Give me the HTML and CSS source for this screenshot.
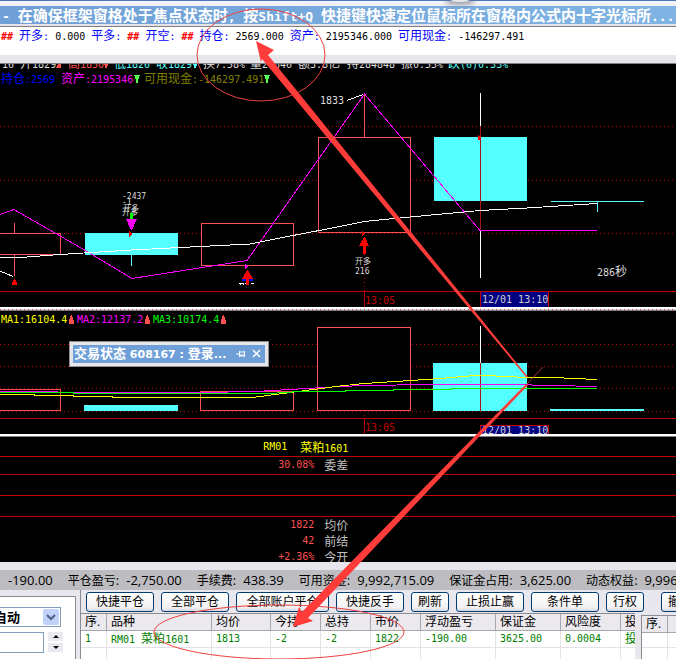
FILE: index.html
```
<!DOCTYPE html>
<html lang="zh-CN">
<head>
<meta charset="utf-8">
<title>菜粕1601</title>
<link rel="stylesheet" href="styles.css">
</head>
<body>
<main class="app">
  <header class="title"><h1><span class="lat">- </span>在确保框架窗格处于焦点状态时<span class="lat">, </span>按<span class="lat">Shift+Q </span>快捷键快速定位鼠标所在窗格内公式内十字光标所<span class="lat">...</span></h1></header>

  <p class="info mono"><b>## </b><i><span class="cn">开多</span>: </i>0.000 <i><span class="cn">平多</span>: </i><b>## </b><i><span class="cn">开空</span>: </i><b>## </b><i><span class="cn">持仓</span>: </i>2569.000 <i><span class="cn">资产</span>: </i>2195346.000 <i><span class="cn">可用现金</span>: </i>-146297.491</p>

  <section class="chart price">
    <svg class="plot mono" viewBox="0 64 676 243" preserveAspectRatio="xMinYMin slice">
      <g class="ticker">
        <text x="2" y="68">16 <tspan class="cn">开</tspan>1829</text>
        <path class="f-salmon" d="M56 68l3-5h2v5z"/>
        <text class="f-salmon" x="68" y="68"><tspan class="cn">高</tspan>1850</text><path class="f-salmon" d="M104 63h5l-3 6z"/>
        <text class="f-cyan" x="114" y="68"><tspan class="cn">低</tspan>1826</text>
        <text class="f-cyan" x="156" y="68"><tspan class="cn">收</tspan>1829</text><path class="f-cyan" d="M193 63h5l-3 6z"/>
        <text x="203" y="68"><tspan class="cn">换</tspan>7.58%</text>
        <text x="250" y="68"><tspan class="cn">量</tspan>21846</text>
        <text x="298" y="68"><tspan class="cn">额</tspan>3.8<tspan class="cn">亿</tspan></text>
        <text x="347" y="68"><tspan class="cn">持</tspan>284848</text>
        <text x="401" y="68"><tspan class="cn">振</tspan>0.55%</text>
        <text class="f-cyan" x="448" y="68"><tspan class="cn">跌</tspan>(6)0.33%</text>
      </g>
      <text class="f-blue" x="1" y="83"><tspan class="cn">持仓</tspan>:2569</text>
      <text class="f-magenta" x="61" y="83"><tspan class="cn">资产</tspan>:2195346</text>
      <path class="f-lime" d="M134 75h6l-2 5v3h-2v-3z"/>
      <text class="f-olive" x="144" y="83"><tspan class="cn">可用现金</tspan>:-146297.491</text>
      <path class="f-lime" d="M264 75h6l-2 5v3h-2v-3z"/>

      <path class="dots" d="M0 126.500H676M0 180.500H676M0 233.500H676M364.500 254V291"/>
      <path class="axis" d="M0 291.500H676M364.500 291V307"/>

      <g class="box">
        <path d="M14.500 223V276"/><rect x="-10" y="233.500" width="70.500" height="21"/>
        <rect x="201.500" y="223.500" width="92" height="42"/>
        <path d="M364.500 94V137"/><rect x="318.500" y="137.500" width="92" height="95"/>
      </g>
      <path class="f-red" d="M12 285v-2l2-4h1l2 4v2z"/>
      <g class="f-cyan">
        <rect x="85" y="233" width="93" height="22"/><rect x="131" y="255" width="1" height="11"/>
        <rect x="434" y="137" width="93" height="64"/>
        <rect x="551" y="201" width="93" height="1"/><rect x="597" y="201" width="1" height="11"/>
      </g>
      <rect class="f-white" x="480" y="93" width="1" height="185"/>
      <rect class="f-cross" x="480" y="126" width="1" height="104"/>

      <path class="line s-magenta" d="M0 214.500L14 209.500L88 252L132 278.500L247 260.500L364.500 94L480 230.500H597"/>
      <path class="line s-white" d="M0 257.500H20L60 254.500L131 250L200 246.500L250 244L293 235.500L340 226.500L364 221.500L410 217L480 210.500L527 208L597 203.500"/>
      <path class="line s-white" d="M0 271L13 276.500M347 100.500L363 94.500"/>

      <text x="320" y="104">1833</text>
      <g class="mark">
        <text x="122" y="199">-2437</text><text x="122" y="205">-1</text>
        <text class="cn-s" x="123" y="211">开多</text><text class="cn-s" x="122" y="215">开多</text>
        <text class="cn-s" x="355" y="264">开多</text><text x="355" y="274">216</text>
      </g>
      <path class="f-green" d="M130 213h3v6h-3z"/><path class="f-magenta" d="M126 219h11l-5 11h-1z"/>
      <path class="f-red" d="M129 231l3 2v2l-3 2zM362 231l3 2v1l-3 2zM478 135l3 2v2l-3 1z"/>
      <path class="f-magenta" d="M245 264l3 2v1l-3 2z"/>
      <path class="f-blue" d="M242 279h11v2h-11z"/>
      <path class="line s-white" d="M239 283.500h4m2 0h4m2 0h3M240.500 283v2M243.500 283v2"/>
      <path class="f-red" d="M247 270h1l5 9h-4v6h-3v-6h-4zM364 237h1l4 9h-3v8h-3v-8h-4z"/>
      <text x="597" y="276">286<tspan class="cn">秒</tspan></text>

      <text class="f-axis" x="365" y="304">13:05</text>
      <rect class="stamp" x="480.500" y="291.500" width="68" height="18"/>
      <text class="f-stamp" x="482" y="303">12/01 13:10</text>
    </svg>
  </section>
  <div class="split dotted"></div>

  <section class="chart volume">
    <svg class="plot mono" viewBox="0 311 676 123" preserveAspectRatio="xMinYMin slice">
      <text class="f-yellow" x="1" y="323">MA1:16104.4</text><path class="f-salmon" d="M69 324v-3l2-6h1l2 6v3z"/>
      <text class="f-magenta" x="77" y="323">MA2:12137.2</text><path class="f-salmon" d="M145 324v-3l2-6h1l2 6v3z"/>
      <text class="f-green" x="153" y="323">MA3:10174.4</text><path class="f-salmon" d="M221 324v-3l2-6h1l2 6v3z"/>
      <path class="dots" d="M0 344.500H676M0 366.500H676M0 388.500H676M0 411.500H676M364.500 411V418"/>
      <path class="axis" d="M0 418.500H676M364.500 418V434"/>
      <g class="box">
        <rect x="-10" y="389.500" width="70.500" height="21"/>
        <rect x="200.500" y="391.500" width="93" height="19"/>
        <rect x="317.500" y="327.500" width="93" height="83"/>
      </g>
      <g class="f-cyan">
        <rect x="84" y="405" width="94" height="6"/>
        <rect x="433" y="363" width="94" height="48"/>
        <rect x="550" y="409" width="94" height="2"/>
      </g>
      <rect class="f-white" x="480" y="326" width="1" height="37"/>
      <rect class="f-cross" x="480" y="363" width="1" height="48"/>
      <path class="line s-magenta" d="M0 391.500H43L73 392.500H200L256 391.500L290 389.500L340 386.500L364 385.500L430 384.500H510L597 386.500"/>
      <path class="line s-yellow" d="M0 394.500H34V395.500H73V396.500H112V397.500H252L283 393.500L317 389L340 386L364 383.500L411 380.500L440 378.500L475 375.500H485L527 377.500H553L597 379.500"/>
      <path class="line s-green" d="M0 392.500H73V393.500H270L300 391.500H345V390.500H393V389.500H451V388.500H597"/>
      <text class="f-axis" x="365" y="431">13:05</text>
      <rect class="stamp" x="480.500" y="425.500" width="68" height="18"/>
      <text class="f-stamp" x="482" y="434">12/01 13:10</text>
    </svg>
  </section>
  <div class="split"></div>

  <section class="quote mono">
    <div class="q-name"><span>RM01</span><span><span class="cn">菜粕</span>1601</span></div>
    <div class="q-row ruled"><span>30.08%</span><em class="cn">委差</em></div>
    <div class="q-gap"></div>
    <div class="q-gap"></div>
    <div class="q-row"><span>1822</span><em class="cn">均价</em></div>
    <div class="q-row"><span>42</span><em class="cn">前结</em></div>
    <div class="q-row"><span>+2.36%</span><em class="cn">今开</em></div>
  </section>

  <section class="status">
    <span>-190.00</span>
    <span><span class="cn">平仓盈亏</span>:<output>-2,750.00</output></span>
    <span><span class="cn">手续费</span>:<output>438.39</output></span>
    <span><span class="cn">可用资金</span>:<output>9,992,715.09</output></span>
    <span><span class="cn">保证金占用</span>:<output>3,625.00</output></span>
    <span><span class="cn">动态权益</span>:<output>9,996,625.09</output></span>
  </section>

  <section class="trade">
    <form class="order">
      <div class="combo">
        <select aria-label="开平方式"><option>自动</option></select>
        <svg class="drop" viewBox="0 0 16 16"><path d="M4 6l4 4 4-4"/></svg>
      </div>
      <div class="amount">
        <input type="text" aria-label="数量">
        <div class="spin">
          <button type="button" aria-label="增加"><svg viewBox="0 0 6 3"><path d="M0 3l3-3 3 3z"/></svg></button>
          <button type="button" aria-label="减少"><svg viewBox="0 0 6 3"><path d="M0 0l3 3 3-3z"/></svg></button>
        </div>
      </div>
    </form>
    <div class="desk">
      <nav class="tools">
        <button class="w4">快捷平仓</button>
        <button class="w4">全部平仓</button>
        <button class="w6">全部账户平仓</button>
        <button class="w4">快捷反手</button>
        <button class="w2">刷新</button>
        <button class="w4">止损止赢</button>
        <button class="w4">条件单</button>
        <button class="w2">行权</button>
        <button class="w2 apart">撤单</button>
      </nav>
      <div class="tables">
        <div class="pane main-pane">
          <table class="positions">
            <colgroup><col class="c26"><col class="c105"><col class="c59"><col class="c50"><col class="c50"><col class="c50"><col class="c75"><col class="c65"><col class="c60"><col></colgroup>
            <thead><tr><th>序.</th><th>品种</th><th>均价</th><th>今持</th><th>总持</th><th>市价</th><th>浮动盈亏</th><th>保证金</th><th>风险度</th><th>投</th></tr></thead>
            <tbody class="mono">
              <tr><td>1</td><td>RM01 <span class="cn">菜粕</span>1601</td><td>1813</td><td>-2</td><td>-2</td><td>1822</td><td>-190.00</td><td>3625.00</td><td>0.0004</td><td><span class="cn">投</span></td></tr>
              <tr><td></td><td></td><td></td><td></td><td></td><td></td><td></td><td></td><td></td><td></td></tr>
            </tbody>
          </table>
        </div>
        <div class="pane side-pane">
          <table>
            <colgroup><col class="c26"><col></colgroup>
            <thead><tr><th>序.</th><th></th></tr></thead>
            <tbody><tr><td></td><td></td></tr><tr><td></td><td></td></tr></tbody>
          </table>
        </div>
      </div>
    </div>
  </section>

  <aside class="float">
    <strong><span class="cn">交易状态</span> 608167 : <span class="cn">登录</span>...</strong>
    <button aria-label="固定"><svg viewBox="0 0 10 10"><path d="M0 5h3M3.500 2v6M4 3h4M4 6h4M4 7h4M8.500 2v6"/></svg></button>
    <button aria-label="关闭"><svg viewBox="0 0 10 10"><path class="x" d="M1 1l7 7M8 1l-7 7"/></svg></button>
  </aside>

  <svg class="notes" viewBox="0 0 676 659" preserveAspectRatio="xMinYMin slice">
    <defs><filter id="soft" x="-50%" y="-50%" width="200%" height="200%"><feGaussianBlur stdDeviation="2"/></filter></defs>
    <ellipse cx="460" cy="2" rx="15" ry="3" fill="#667" opacity=".6" filter="url(#soft)"/>
    <ellipse cx="460" cy="-1" rx="10" ry="3" fill="#e4eaf0"/>
    <ellipse class="ring" cx="261" cy="55" rx="64" ry="46"/>
    <ellipse class="ring" cx="279" cy="632" rx="125" ry="27"/>
    <path class="arrow" d="M256 41L274 50L268 55L528 377L526 377L262 59L261 62z"/>
    <path class="arrow" d="M293 627L299 607L302 612L526 384L528 385L308 618L313 621z"/>
    <path class="tail" d="M526 385L543 367"/>
  </svg>
</main>
</body>
</html>
```

FILE: styles.css
```
* { box-sizing: border-box; }

body {
  margin: 0;
  background: #e9e7ee;
  font: 12px/16px "Open Sans", "Noto Sans CJK SC", sans-serif;
  color: #000;
}

.app {
  position: relative;
  display: flex;
  flex-direction: column;
  min-height: 100vh;
  overflow: hidden;
}

.mono { font: 10px/16px "DejaVu Sans Mono", "Noto Sans CJK SC", monospace; }
.cn { font-family: "Noto Sans CJK SC", sans-serif; font-size: 12px; }

button { font: inherit; color: inherit; padding: 0; }

/* title and formula line */
.title {
  height: 27px;
  padding-top: 4px;
  border-top: 1px solid #4a78be;
  border-bottom: 1px solid #808084;
  background: linear-gradient(#f4f4f8, #e2e2e8);
}
.title h1 {
  margin: 1px 0;
  padding-left: 2px;
  height: 18px;
  background: linear-gradient(90deg, #6f9fd6, #7fb4e4);
  color: #fff;
  font: bold 15px/18px "Noto Sans CJK SC", sans-serif;
  white-space: pre;
}
.title .lat { font: bold 13px/16px "DejaVu Sans Mono", monospace; }

.info {
  margin: 0;
  height: 37px;
  padding: 0 1px;
  background: linear-gradient(#fff 28px, #e6e6ea 28px 36px, #808084 36px);
  white-space: pre;
}
.info b { color: #f00; font-weight: bold; }
.info i { color: #00f; font-style: normal; }

/* charts */
.chart { background: #000; overflow: hidden; }
.price { height: 243px; }
.volume { height: 123px; }
.split { height: 3px; background: #fff; border-bottom: 1px solid #808084; }
.dotted {
  height: 4px;
  border-top: 2px solid #fff;
  background: repeating-linear-gradient(90deg, #d04040 0 1px, #d8d8dc 1px 4px);
}
.plot { display: block; width: 100%; height: 100%; fill: #dcdcdc; shape-rendering: crispEdges; }
.plot text { white-space: pre; }
.mark { font-size: 8px; }
.cn-s { font: 8px "Noto Sans CJK SC", sans-serif; }

.dots { stroke: #c00000; stroke-dasharray: 1 3; fill: none; }
.axis { stroke: #c00000; fill: none; }
.box { stroke: #ff5050; fill: #000; }
.line { fill: none; }
.stamp { fill: #000080; stroke: #c00000; }

.s-white { stroke: #fff; }
.s-magenta { stroke: #f0f; }
.s-yellow { stroke: #ff0; }
.s-green { stroke: #0f0; }

.f-white { fill: #fff; }
.f-red { fill: #f00; }
.f-salmon { fill: #ff5050; }
.f-cyan { fill: #54ffff; }
.f-blue { fill: #00f; }
.f-magenta { fill: #f0f; }
.f-lime { fill: #50ff50; }
.f-green { fill: #0f0; }
.f-olive { fill: #808000; }
.f-yellow { fill: #ff0; }
.f-cross { fill: #a81818; }
.f-axis { fill: #c00000; }
.f-stamp { fill: #d0d0d0; }

/* quote panel */
.quote { height: 125px; overflow: hidden; background: #000; color: #ff5050; }
.q-name, .q-row { display: grid; grid-template-columns: 46.5% 1fr; column-gap: 10px; height: 16px; }
.q-name {
  grid-template-columns: 42.5% 1fr;
  column-gap: 13px;
  height: 20px;
  line-height: 19px;
  color: #ff0;
  border-bottom: 1px solid #c00000;
}
.q-name > :first-child, .q-row > :first-child { text-align: right; }
.q-row em { color: #c0c0c0; font-style: normal; }
.ruled { height: 18px; border-bottom: 1px solid #c00000; }
.q-gap { height: 21px; border-bottom: 1px solid #c00000; }

/* account line */
.status {
  display: flex;
  gap: 15px;
  height: 28px;
  padding-left: 8px;
  border-top: 8px solid #e6e6ec;
  background: #bdbdc1;
  font-size: 13px;
  line-height: 20px;
  white-space: nowrap;
  overflow: hidden;
}
.status > span { flex: none; }
.status output { margin-left: 7px; }

/* order form */
.trade { display: flex; flex: 1; overflow: hidden; }
.order {
  flex: none;
  width: 76px;
  margin: 6px 4px 0 0;
  padding-top: 10px;
  background: #fff;
  border-top: 1px solid #8a8a90;
  border-right: 1px solid #8a8a90;
  overflow: hidden;
}
.combo {
  display: flex;
  align-items: center;
  width: 72px;
  height: 20px;
  margin-left: -11px;
  border: 1px solid #7f9db9;
}
.combo select {
  flex: 1;
  min-width: 0;
  height: 18px;
  padding: 0 0 0 4px;
  border: 0;
  appearance: none;
  background: #fff;
  font: bold 13px/18px "Noto Sans CJK SC", sans-serif;
}
.drop { width: 16px; height: 16px; margin-right: 1px; background: #c0d2fa; border-radius: 2px; }
.drop path { fill: none; stroke: #4d6185; stroke-width: 2; }
.amount { display: flex; gap: 4px; margin-top: 5px; margin-left: -1px; }
.amount input { width: 45px; height: 21px; padding: 0; border: 1px solid #7f9db9; }
.spin { display: flex; flex-direction: column; gap: 2px; }
.spin button { display: flex; align-items: center; justify-content: center; width: 15px; height: 9px; border: 0; background: #ebe9f0; }
.spin svg { width: 6px; height: 3px; }

/* positions */
.desk { flex: 1; min-width: 0; display: flex; flex-direction: column; border-left: 1px solid #8a8a90; }
.tools { display: flex; gap: 7px; padding: 2px 0 1px 5px; }
.tools button {
  flex: none;
  height: 20px;
  border: 1px solid #003c74;
  border-radius: 3px;
  background: linear-gradient(#fff, #f2f2f4 80%, #d8d6de);
  line-height: 16px;
}
.w2 { width: 38px; }
.w4 { width: 68px; }
.w6 { width: 93px; }
.tools .apart { margin-left: 10px; }

.tables { display: flex; flex: 1; }
.pane { background: #fff; border-top: 1px solid #8a8a90; overflow: hidden; }
.main-pane { flex: none; width: 554px; }
.side-pane { flex: 1; margin: 2px 0 0 6px; border-left: 1px solid #8a8a90; }
table { width: 100%; table-layout: fixed; border-collapse: separate; border-spacing: 0; }
th, td {
  height: 15px;
  padding: 0 0 0 4px;
  border-right: 1px solid #e4e2e8;
  border-bottom: 1px solid #e4e2e8;
  text-align: left;
  line-height: 14px;
  overflow: hidden;
  white-space: nowrap;
}
th {
  height: 17px;
  padding-left: 4px;
  background: #ebe9ee;
  border-bottom-color: #a8a8ac;
  border-right-color: #a8a8ac;
  font-weight: normal;
}
td { color: #008000; }
th:last-child, td:last-child { border-right: 0; }
.c26 { width: 26px; }
.c50 { width: 50px; }
.c59 { width: 59px; }
.c60 { width: 60px; }
.c65 { width: 65px; }
.c75 { width: 75px; }
.c105 { width: 105px; }

/* floating status window */
.float {
  position: absolute;
  left: 69px;
  top: 341px;
  display: flex;
  align-items: center;
  gap: 6px;
  width: 200px;
  height: 26px;
  padding: 0 3px 0 1px;
  border: 4px solid #e6e6ea;
  outline: 1px solid #909094;
  outline-offset: -1px;
  background: #6f9fd8;
  color: #fff;
}
.float strong { flex: 1; font: bold 11px/18px "DejaVu Sans", "Noto Sans CJK SC", sans-serif; white-space: nowrap; }
.float .cn { font-size: 13px; }
.float button { width: 10px; height: 10px; border: 0; background: none; }
.float svg { display: block; width: 10px; height: 10px; fill: none; stroke: #fff; }
.float .x { stroke-width: 1.5; }

/* hand-drawn annotations */
.notes { position: absolute; left: 0; top: 0; width: 100%; height: 659px; pointer-events: none; }
.ring { fill: none; stroke: #f04040; }
.arrow { fill: #ff3c3a; }
.tail { stroke: #a03030; fill: none; }
```
